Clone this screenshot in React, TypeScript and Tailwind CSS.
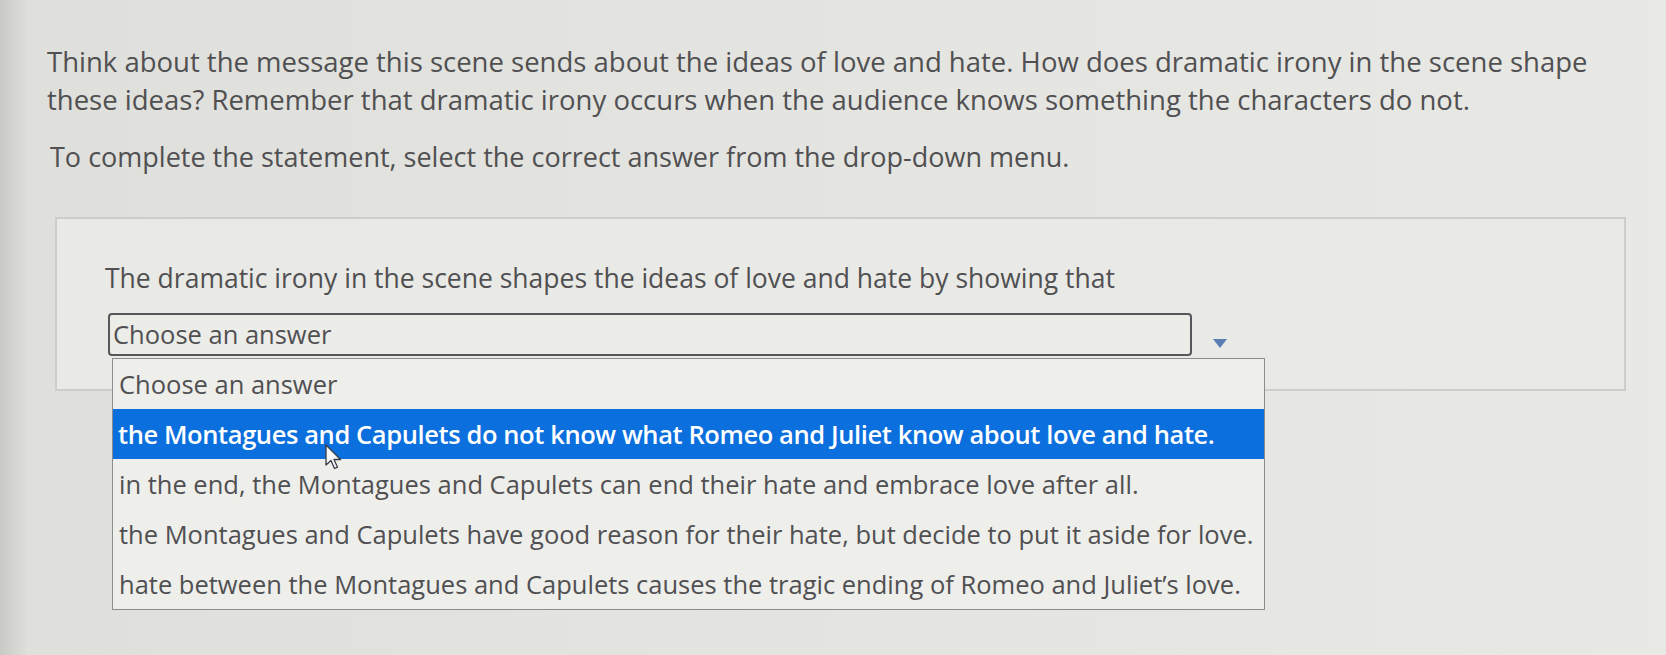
const options = [
  'Choose an answer',
  'the Montagues and Capulets do not know what Romeo and Juliet know about love and hate.',
  'in the end, the Montagues and Capulets can end their hate and embrace love after all.',
  'the Montagues and Capulets have good reason for their hate, but decide to put it aside for love.',
  "hate between the Montagues and Capulets causes the tragic ending of Romeo and Juliet’s love.",
];

function Cursor() {
  return (
    <svg width="20" height="28" viewBox="0 0 20 28" className="absolute left-[325px] top-[444px] z-20">
      <path d="M1 1 L1 21 L6 16.5 L9.5 24.5 L12.5 23.2 L9 15.5 L15.5 15.5 Z" fill="#f4f6fa" stroke="#3a3d44" strokeWidth="1.3" strokeLinejoin="round" />
    </svg>
  );
}

export default function App() {
  return (
    <div className="relative min-h-screen w-full overflow-hidden bg-[linear-gradient(90deg,#c9cac6_0px,#dfdfdb_28px,#e3e3df_40%,#e8e8e4_100%)] font-['Open_Sans',sans-serif] text-[#505052]">
      <div className="pl-[47px] pt-[43px]">
        <p className="text-[27.5px] leading-[38px] whitespace-nowrap">
          Think about the message this scene sends about the ideas of love and hate. How does dramatic irony in the scene shape
          <br />
          these ideas? Remember that dramatic irony occurs when the audience knows something the characters do not.
        </p>
        <p className="mt-[19px] pl-[3px] text-[27px] leading-[38px] whitespace-nowrap">
          To complete the statement, select the correct answer from the drop-down menu.
        </p>
      </div>

      <div className="ml-[55px] mt-[41px] box-border h-[174px] w-[1571px] border-2 border-[#cdcdcb] bg-[#e9e9e6] pl-[48px] pt-[41px]">
        <p className="text-[26.5px] leading-[36px] whitespace-nowrap">
          The dramatic irony in the scene shapes the ideas of love and hate by showing that
        </p>
        <div className="relative mt-[17px] flex items-center pl-[3px]">
          <div className="box-border flex h-[43px] w-[1084px] items-center rounded-[4px] border-2 border-[#56575c] bg-[#ecece9] px-[3px] text-[25.5px] leading-none">
            Choose an answer
          </div>
          <svg width="14" height="9" viewBox="0 0 14 9" className="ml-[21px] mt-[18px]">
            <path d="M0 0 H14 L7 9 Z" fill="#5a7fb5" />
          </svg>

          <ul className="absolute left-[7px] top-[45px] z-10 box-border w-[1153px] border border-[#8b8c8f] bg-[#eeeeeb] text-[25.5px]">
            {options.map((o, i) => (
              <li
                key={o}
                className={
                  i === 1
                    ? 'flex h-[50px] items-center whitespace-nowrap bg-[#0b6fdd] pl-[5px] font-semibold tracking-[-0.4px] text-white'
                    : 'flex h-[50px] items-center whitespace-nowrap pl-[6px]'
                }
              >
                {o}
              </li>
            ))}
          </ul>
        </div>
      </div>

      <Cursor />
    </div>
  );
}
